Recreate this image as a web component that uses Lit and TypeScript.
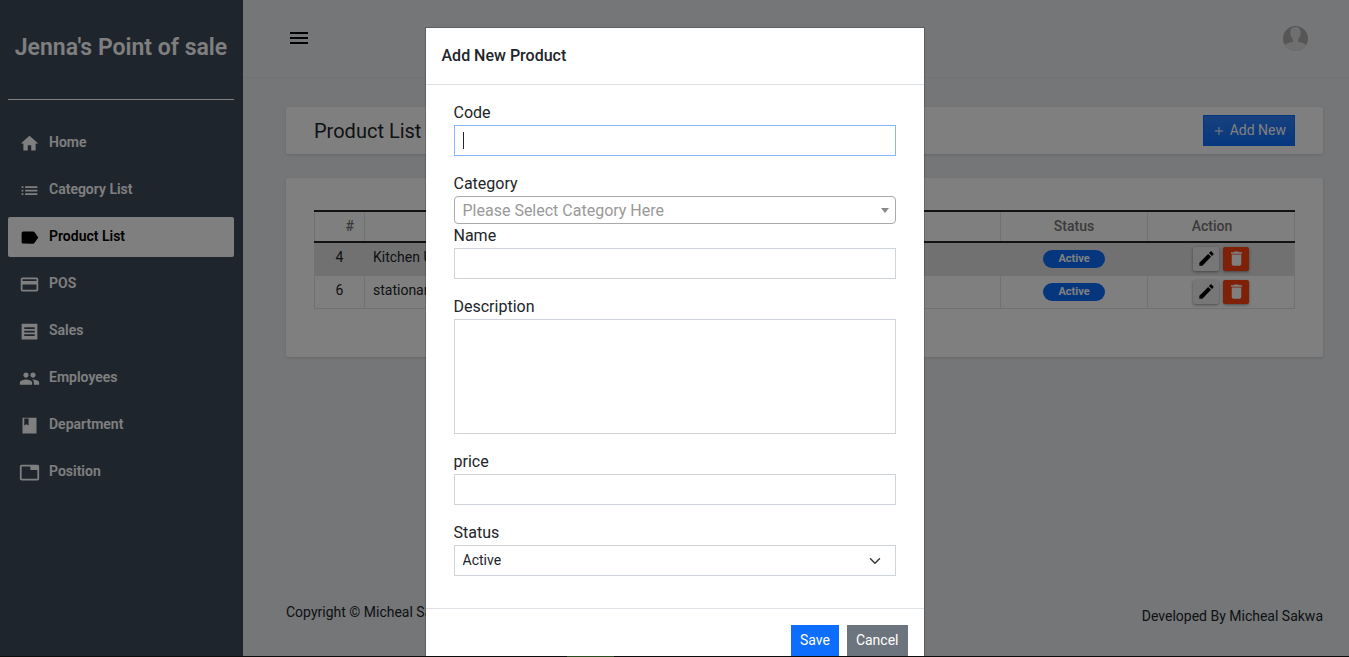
import { LitElement, html, css, svg } from "lit";
import { customElement, property } from "lit/decorators.js";
import { classMap } from "lit/directives/class-map.js";

const ICONS: Record<string, string> = {
  home: "M10 20v-6h4v6h5v-8h3L12 3 2 12h3v8z",
  list: "M3 13h2v-2H3v2zm0 4h2v-2H3v2zm0-8h2V7H3v2zm4 4h14v-2H7v2zm0 4h14v-2H7v2zM7 7v2h14V7H7z",
  label:
    "M17.63 5.84C17.27 5.33 16.67 5 16 5L5 5.01C3.9 5.01 3 5.9 3 7v10c0 1.1.9 1.99 2 1.99L16 19c.67 0 1.27-.33 1.63-.84L22 12l-4.37-6.16z",
  card: "M20 4H4c-1.11 0-1.99.89-1.99 2L2 18c0 1.11.89 2 2 2h16c1.11 0 2-.89 2-2V6c0-1.11-.89-2-2-2zm0 14H4v-6h16v6zm0-10H4V6h16v2z",
  receipt: "M3 3v18h18V3H3zm15 14H6v-2h12v2zm0-4H6v-2h12v2zm0-4H6V7h12v2z",
  people:
    "M16 11c1.66 0 2.99-1.34 2.99-3S17.66 5 16 5c-1.66 0-3 1.34-3 3s1.34 3 3 3zm-8 0c1.66 0 2.99-1.34 2.99-3S9.66 5 8 5C6.34 5 5 6.34 5 8s1.34 3 3 3zm0 2c-2.33 0-7 1.17-7 3.5V19h14v-2.500c0-2.330-4.670-3.500-7-3.500zm8 0c-.29 0-.62.02-.97.05 1.160.84 1.970 1.970 1.970 3.450V19h6v-2.500c0-2.330-4.670-3.500-7-3.500z",
  book: "M20 3H4v18h16V3zM6 4h5v8l-2.500-1.500L6 12V4z",
  tab: "M21 3H3c-1.1 0-2 .9-2 2v14c0 1.1.9 2 2 2h18c1.1 0 2-.9 2-2V5c0-1.1-.9-2-2-2zm0 16H3V5h10v4h8v10z",
  menu: "M3 18h18v-2H3v2zm0-5h18v-2H3v2zm0-7v2h18V6H3z",
  edit: "M3 17.25V21h3.75L17.81 9.94l-3.75-3.75L3 17.25zM20.71 7.04c.39-.39.39-1.02 0-1.41l-2.34-2.34c-.39-.39-1.02-.39-1.41 0l-1.83 1.83 3.75 3.75 1.83-1.83z",
  trash: "M6 19c0 1.100.9 2 2 2h8c1.100 0 2-.9 2-2V7H6v12zM19 4h-3.500l-1-1h-5l-1 1H5v2h14V4z",
  plus: "M19 12.800h-6.200V19h-1.600v-6.200H5v-1.600h6.200V5h1.600v6.200H19z",
};

@customElement("pos-icon")
class PosIcon extends LitElement {
  @property() name = "home";

  static styles = css`
    :host {
      display: inline-block;
      width: 20px;
      height: 20px;
      flex: none;
    }
    svg {
      display: block;
      width: 100%;
      height: 100%;
      fill: currentColor;
    }
  `;

  render() {
    return html`<svg viewBox="0 0 24 24" aria-hidden="true">${svg`<path d=${ICONS[this.name]}></path>`}</svg>`;
  }
}

const NAV = [
  { icon: "home", text: "Home" },
  { icon: "list", text: "Category List" },
  { icon: "label", text: "Product List", active: true },
  { icon: "card", text: "POS" },
  { icon: "receipt", text: "Sales" },
  { icon: "people", text: "Employees" },
  { icon: "book", text: "Department" },
  { icon: "tab", text: "Position" },
];

const ROWS = [
  { id: 4, name: "Kitchen Utensils", status: "Active" },
  { id: 6, name: "stationary", status: "Active" },
];

@customElement("app-root")
class AppRoot extends LitElement {
  static styles = css`
    :host {
      display: block;
      font: 14px/21px Roboto, "Liberation Sans", sans-serif;
      color: #212529;
    }
    *,
    *::before,
    *::after {
      box-sizing: border-box;
    }
    h1, h2, p {
      margin: 0;
    }
    button, input, select, textarea {
      font: inherit;
      color: inherit;
      margin: 0;
    }

    .page {
      display: grid;
      grid-template-columns: 243px minmax(0, 1fr);
      min-height: 100vh;
      background: #e9ecef;
    }

    .sidebar {
      background: #3e4b5b;
      color: #fff;
      padding: 0 9px 0 8px;
    }
    .brand {
      height: 100px;
      padding-top: 30px;
      border-bottom: 1px solid #fff;
      font-size: 23px;
      line-height: 36px;
      font-weight: 600;
      text-align: center;
      white-space: nowrap;
    }
    .nav {
      display: flex;
      flex-direction: column;
      gap: 7px;
      margin-top: 23px;
    }
    .nav-link {
      display: flex;
      align-items: center;
      gap: 9px;
      height: 40px;
      padding: 0 11px 2px;
      border-radius: 2px;
      color: #fff;
      font-weight: 600;
      text-decoration: none;
    }
    .nav-link.active {
      background: #fff;
      color: #000;
    }
    .nav-icon {
      width: 21px;
      height: 21px;
      margin-top: 3px;
    }

    .main {
      display: flex;
      flex-direction: column;
      min-width: 0;
    }
    .topbar {
      display: flex;
      align-items: center;
      justify-content: space-between;
      height: 78px;
      padding: 0 41px 1px 44px;
      border-bottom: 1px solid #dfe2e5;
    }
    .menu-button {
      padding: 0;
      border: 0;
      background: none;
      color: #000;
      line-height: 0;
    }
    .menu-icon {
      width: 24px;
      height: 24px;
    }
    .avatar {
      width: 25px;
      height: 25px;
      border-radius: 50%;
      display: block;
    }
    .content {
      display: flex;
      flex-direction: column;
      gap: 24px;
      padding: 29px 26px 0 43px;
    }
    .card {
      background: #fff;
      border-radius: 2px;
      box-shadow: 0 1px 3px rgba(0, 0, 0, 0.12);
    }
    .title-card {
      display: flex;
      align-items: center;
      justify-content: space-between;
      padding: 8px 28px;
    }
    .page-title {
      padding-top: 1px;
      font-size: 20px;
      line-height: 30px;
      font-weight: 400;
    }
    .add-button {
      display: flex;
      align-items: center;
      gap: 4px;
      padding: 4px 8px;
      border: 1px solid #0d6efd;
      background: #0d6efd linear-gradient(rgba(255, 255, 255, 0.15), rgba(255, 255, 255, 0));
      color: #fff;
    }
    .add-icon {
      width: 14px;
      height: 14px;
    }
    .table-card {
      padding: 32px 28px 48px;
    }
    .table {
      width: 100%;
      table-layout: fixed;
      border-collapse: collapse;
    }
    .table th {
      height: 31px;
      padding: 0 8px;
      border: 1px solid #dee2e6;
      border-top: 2px solid #212529;
      border-bottom: 2px solid #212529;
      color: #777;
      font-weight: 500;
    }
    .table td {
      height: 33px;
      padding: 0 8px 2px;
      border: 1px solid #dee2e6;
    }
    .table td.tight {
      padding-bottom: 0;
    }
    .table tbody tr:first-child td {
      background: #e2e2e2;
      border-color: #e2e2e2;
    }
    .col-id {
      width: 50px;
    }
    .col-fixed {
      width: 147px;
    }
    .table th.head-id {
      padding-right: 10px;
      text-align: right;
    }
    .table th.head-action {
      padding-right: 26px;
    }
    .center {
      text-align: center;
    }
    .badge {
      display: block;
      width: 62px;
      margin: 0 auto;
      border-radius: 9px;
      background: #0d6efd;
      color: #fff;
      font-size: 11px;
      line-height: 18px;
      font-weight: 700;
    }
    .actions {
      display: flex;
      justify-content: center;
      gap: 4px;
    }
    .action {
      display: flex;
      align-items: center;
      justify-content: center;
      width: 26px;
      height: 24px;
      padding: 0;
      border: 0;
      border-radius: 2px;
      background: #efefef;
      color: #000;
      box-shadow: 0 1px 3px rgba(0, 0, 0, 0.4);
    }
    .action.delete {
      background: #fc4211;
      color: #fff;
    }
    .action-icon {
      width: 19px;
      height: 19px;
    }

    .footer {
      display: flex;
      justify-content: space-between;
      margin-top: auto;
      padding: 24px 26px 30px 43px;
    }
    .credit {
      padding-top: 4px;
    }

    .overlay {
      position: fixed;
      inset: 0;
      padding: 27px 16px;
      overflow-y: auto;
      scrollbar-width: none;
      background: rgba(0, 0, 0, 0.5);
    }
    .modal {
      max-width: 500px;
      margin: 0 auto;
      border: 1px solid rgba(0, 0, 0, 0.2);
      background: #fff;
      background-clip: padding-box;
    }
    .modal-head {
      padding: 16px;
      border-bottom: 1px solid #dee2e6;
    }
    .modal-title {
      font-size: 16px;
      line-height: 24px;
      font-weight: 500;
    }
    .modal-body {
      display: flex;
      flex-direction: column;
      padding: 16px 28px 32px;
      gap: 16px;
    }
    .group {
      display: flex;
      flex-direction: column;
    }
    .label {
      font-size: 16px;
      line-height: 24px;
    }
    .control {
      display: block;
      width: 100%;
      height: 31px;
      padding: 4px 8px;
      border: 1px solid #ced4da;
      border-radius: 0;
      background: #fff;
      outline: 0;
      appearance: none;
    }
    .control.current {
      border-color: #86b7fe;
      background: linear-gradient(#212529, #212529) 8px 6px / 1px 17px no-repeat #fff;
    }
    .control.area {
      height: 115px;
      resize: none;
    }
    .picker {
      position: relative;
      display: flex;
    }
    .category {
      width: 100%;
      height: 28px;
      padding: 0 8px;
      border: 1px solid #aaa;
      border-radius: 4px;
      background: #fff;
      color: #999;
      font-size: 16px;
      appearance: none;
    }
    .arrow {
      position: absolute;
      right: 7px;
      top: 12px;
      border: 4px solid transparent;
      border-top: 5px solid #888;
      border-bottom: 0;
      pointer-events: none;
    }
    .chevron {
      position: absolute;
      right: 15px;
      top: 10px;
      width: 12px;
      height: 12px;
      fill: none;
      stroke: #343a40;
      stroke-width: 2;
      stroke-linecap: round;
      stroke-linejoin: round;
      pointer-events: none;
    }
    .modal-foot {
      display: flex;
      justify-content: flex-end;
      gap: 8px;
      padding: 16px;
      border-top: 1px solid #dee2e6;
    }
    .button {
      padding: 4px 8px;
      border: 1px solid #0d6efd;
      background: #0d6efd;
      color: #fff;
    }
    .button.secondary {
      border-color: #6c757d;
      background: #6c757d;
    }
    .edge {
      position: fixed;
      inset: auto 0 0 0;
      height: 1px;
      background: linear-gradient(90deg, #0b0d0c 42%, #2a4a20 42%, #2a4a20 45.5%, #0b0d0c 45.5%);
    }
  `;

  render() {
    return html`
      <div class="page">
        <aside class="sidebar">
          <div class="brand">Jenna's Point of sale</div>
          <nav class="nav">
            ${NAV.map(
              (item) => html`<a class=${classMap({ "nav-link": true, active: !!item.active })} href="#">
                <pos-icon class="nav-icon" name=${item.icon}></pos-icon>${item.text}
              </a>`
            )}
          </nav>
        </aside>
        <div class="main">
          <header class="topbar">
            <button class="menu-button" aria-label="Menu">
              <pos-icon class="menu-icon" name="menu"></pos-icon>
            </button>
            <svg class="avatar" viewBox="0 0 25 25" role="img" aria-label="Profile">
              <rect width="25" height="25" fill="#adadad"></rect>
              <path
                d="M12.500 1c-3.800 0-5.300 2.600-5.200 6 .1 3 1.300 5 2.700 6.400v2C7.500 16.500 3 17 1 20v5h23v-5c-2-3-6.500-3.500-9-4.600v-2c1.400-1.400 2.600-3.400 2.700-6.400.1-3.400-1.400-6-5.200-6z"
                fill="#dedede"
              ></path>
            </svg>
          </header>
          <main class="content">
            <section class="card title-card">
              <h1 class="page-title">Product List</h1>
              <button class="add-button"><pos-icon class="add-icon" name="plus"></pos-icon>Add New</button>
            </section>
            <section class="card table-card">
              <table class="table">
                <colgroup>
                  <col class="col-id" />
                  <col />
                  <col class="col-fixed" />
                  <col class="col-fixed" />
                </colgroup>
                <thead>
                  <tr>
                    <th class="head-id">#</th>
                    <th>Name</th>
                    <th>Status</th>
                    <th class="head-action">Action</th>
                  </tr>
                </thead>
                <tbody>
                  ${ROWS.map(
                    (row) => html`<tr>
                      <td class="center">${row.id}</td>
                      <td>${row.name}</td>
                      <td class="center tight"><span class="badge">${row.status}</span></td>
                      <td class="tight">
                        <div class="actions">
                          <button class="action" type="button" aria-label="Edit">
                            <pos-icon class="action-icon" name="edit"></pos-icon>
                          </button>
                          <button class="action delete" type="button" aria-label="Delete">
                            <pos-icon class="action-icon" name="trash"></pos-icon>
                          </button>
                        </div>
                      </td>
                    </tr>`
                  )}
                </tbody>
              </table>
            </section>
          </main>
          <footer class="footer">
            <p>Copyright © Micheal Sakwa</p>
            <p class="credit">Developed By Micheal Sakwa</p>
          </footer>
        </div>
      </div>

      <div class="overlay">
        <form class="modal" role="dialog" aria-labelledby="modal-title">
          <div class="modal-head"><h2 class="modal-title" id="modal-title">Add New Product</h2></div>
          <div class="modal-body">
            <div class="group">
              <label class="label" for="code">Code</label>
              <input class="control current" id="code" type="text" />
            </div>
            <div class="group">
              <label class="label" for="category">Category</label>
              <div class="picker">
                <select class="category" id="category">
                  <option>Please Select Category Here</option>
                </select>
                <span class="arrow"></span>
              </div>
              <label class="label" for="name">Name</label>
              <input class="control" id="name" type="text" />
            </div>
            <div class="group">
              <label class="label" for="description">Description</label>
              <textarea class="control area" id="description"></textarea>
            </div>
            <div class="group">
              <label class="label" for="price">price</label>
              <input class="control" id="price" type="text" />
            </div>
            <div class="group">
              <label class="label" for="status">Status</label>
              <div class="picker">
                <select class="control" id="status">
                  <option>Active</option>
                  <option>Inactive</option>
                </select>
                <svg class="chevron" viewBox="0 0 16 16" aria-hidden="true"><path d="m2 5 6 6 6-6"></path></svg>
              </div>
            </div>
          </div>
          <div class="modal-foot">
            <button class="button" type="button">Save</button>
            <button class="button secondary" type="button">Cancel</button>
          </div>
        </form>
      </div>
      <div class="edge"></div>
    `;
  }
}
